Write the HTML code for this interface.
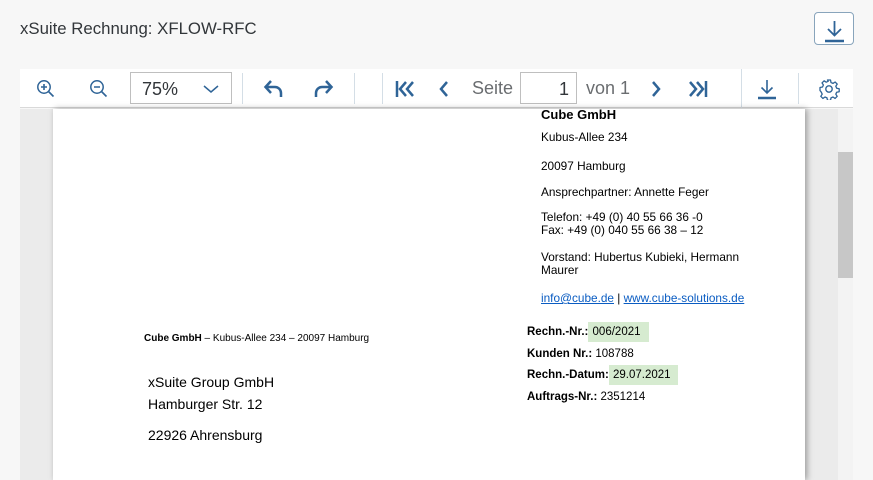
<!DOCTYPE html>
<html><head><style>
*{margin:0;padding:0;box-sizing:border-box}
body{width:873px;height:480px;overflow:hidden;background:#f7f7f7;font-family:"Liberation Sans",Arial,sans-serif;position:relative}
.abs{position:absolute}
.title{left:20px;top:19px;font-size:16.8px;color:#32363a}
.dlbtn{left:814px;top:12px;width:40px;height:33px;border:1px solid #89a5bc;border-radius:4px;background:#fff}
.tb{left:20px;top:69px;width:833px;height:39px;background:#fff;border-bottom:1px solid #d9d9d9}
.sep{position:absolute;top:4px;width:1px;height:31px;background:#d4dee6}
.zoom{left:110px;top:3px;width:102px;height:32px;border:1px solid #bfbfbf;font-size:18px;color:#32363a;padding:6px 0 0 11px}
.pg{left:500px;top:3px;width:57px;height:32px;border:1px solid #bfbfbf;font-size:18px;color:#32363a;text-align:right;padding:6px 7px 0 0}
.lbl{font-size:18px;color:#6a6d70;top:9px}
.view{left:20px;top:109px;width:818px;height:371px;background:#ebebeb}
.page{left:53px;top:109px;width:752px;height:371px;background:#fff;box-shadow:2px 0 6px rgba(0,0,0,.35)}
.sb{left:838px;top:109px;width:15px;height:371px;background:#f3f3f3}
.thumb{left:838px;top:152px;width:15px;height:126px;background:#c7c7c7}
.s{font-size:11.8px;color:#000}
.hl{background:#d6ebd0}
a{color:#0a5cc2;text-decoration:underline}
</style></head><body>
<div class="abs title">xSuite Rechnung: XFLOW-RFC</div>
<div class="abs dlbtn"><svg width="40" height="33" viewBox="0 0 40 33"><path d="M19.5 8v14M13 16l6.5 6.5L26 16" stroke="#2f6497" stroke-width="1.8" fill="none"/><path d="M10 28h19" stroke="#2f6497" stroke-width="2.5"/></svg></div>
<div class="abs tb">
 <svg class="abs" style="left:16px;top:10px" width="20" height="20" viewBox="0 0 20 20"><circle cx="8" cy="8" r="6.2" stroke="#2f6497" stroke-width="1.5" fill="none"/><path d="M5 8h6M8 5v6M12.5 12.5l5 5" stroke="#2f6497" stroke-width="1.6"/></svg>
 <svg class="abs" style="left:69px;top:10px" width="20" height="20" viewBox="0 0 20 20"><circle cx="8" cy="8" r="6.2" stroke="#2f6497" stroke-width="1.5" fill="none"/><path d="M5 8h6M12.5 12.5l5 5" stroke="#2f6497" stroke-width="1.6"/></svg>
 <div class="abs zoom">75%<svg class="abs" style="left:72px;top:11px" width="16" height="10"><path d="M1 2l7 6 7-6" stroke="#2f6497" stroke-width="1.5" fill="none"/></svg></div>
 <div class="sep" style="left:222px"></div>
 <svg class="abs" style="left:243px;top:9px" width="22" height="22" viewBox="0 0 22 22"><path d="M3 9h9a6 6 0 0 1 6 6v4" stroke="#2f6497" stroke-width="2.5" fill="none"/><path d="M8 3L2.5 9 8 15" stroke="#2f6497" stroke-width="2.5" fill="none"/></svg>
 <svg class="abs" style="left:292px;top:9px" width="22" height="22" viewBox="0 0 22 22"><path d="M19 9h-9a6 6 0 0 0-6 6v4" stroke="#2f6497" stroke-width="2.5" fill="none"/><path d="M14 3l5.5 6L14 15" stroke="#2f6497" stroke-width="2.5" fill="none"/></svg>
 <div class="sep" style="left:334px"></div>
 <div class="sep" style="left:362px"></div>
 <svg class="abs" style="left:374px;top:10px" width="22" height="20" viewBox="0 0 22 20"><path d="M3 2v16" stroke="#2f6497" stroke-width="2.5"/><path d="M12 3l-6 7 6 7M19 3l-6 7 6 7" stroke="#2f6497" stroke-width="2.5" fill="none"/></svg>
 <svg class="abs" style="left:416px;top:10px" width="14" height="20" viewBox="0 0 14 20"><path d="M11 3l-6 7 6 7" stroke="#2f6497" stroke-width="2.5" fill="none"/></svg>
 <div class="abs lbl" style="left:452px">Seite</div>
 <div class="abs pg">1</div>
 <div class="abs lbl" style="left:566px">von 1</div>
 <svg class="abs" style="left:630px;top:10px" width="14" height="20" viewBox="0 0 14 20"><path d="M3 3l6 7-6 7" stroke="#2f6497" stroke-width="2.5" fill="none"/></svg>
 <svg class="abs" style="left:667px;top:10px" width="22" height="20" viewBox="0 0 22 20"><path d="M19 2v16" stroke="#2f6497" stroke-width="2.5"/><path d="M3 3l6 7-6 7M10 3l6 7-6 7" stroke="#2f6497" stroke-width="2.5" fill="none"/></svg>
 <div class="sep" style="left:721px;top:0;height:39px"></div>
 <svg class="abs" style="left:736px;top:8px" width="22" height="24" viewBox="0 0 22 24"><path d="M11 3v13M5.5 10.5L11 16l5.5-5.5" stroke="#2f6497" stroke-width="1.6" fill="none"/><path d="M2 21h18" stroke="#2f6497" stroke-width="2.5"/></svg>
 <div class="sep" style="left:778px"></div>
 <svg class="abs" style="left:798px;top:9px" width="22" height="22" viewBox="0 0 22 22"><circle cx="11" cy="11" r="3.2" stroke="#2f6497" stroke-width="1.4" fill="none"/><path d="M9.5 2h3l.5 2.5 2 .9 2.1-1.4 2.1 2.1-1.4 2.1.9 2 2.5.5v3l-2.5.5-.9 2 1.4 2.1-2.1 2.1-2.1-1.4-2 .9-.5 2.5h-3l-.5-2.5-2-.9-2.1 1.4-2.1-2.1 1.4-2.1-.9-2L2 12.5v-3l2.5-.5.9-2L4 4.9 6.1 2.8l2.1 1.4 2-.9z" stroke="#2f6497" stroke-width="1.3" fill="none" stroke-linejoin="round"/></svg>
</div>
<div class="abs view"></div>
<div class="abs page"></div>
<div class="abs sb"></div>
<div class="abs thumb"></div>
<div class="abs" style="left:541px;top:107px;font-size:13px;font-weight:bold">Cube GmbH</div>
<div class="abs s" style="left:541px;top:130px">Kubus-Allee 234</div>
<div class="abs s" style="left:541px;top:159px">20097 Hamburg</div>
<div class="abs s" style="left:541px;top:185px">Ansprechpartner: Annette Feger</div>
<div class="abs s" style="left:541px;top:211px;line-height:13px">Telefon: +49 (0) 40 55 66 36 -0<br>Fax: +49 (0) 040 55 66 38 – 12</div>
<div class="abs s" style="left:541px;top:251px;line-height:13px">Vorstand: Hubertus Kubieki, Hermann<br>Maurer</div>
<div class="abs s" style="left:541px;top:291px"><a>info@cube.de</a> | <a>www.cube-solutions.de</a></div>
<div class="abs" style="left:144px;top:333px;font-size:10px"><b>Cube GmbH</b> – Kubus-Allee 234 – 20097 Hamburg</div>
<div class="abs s" style="left:527px;top:322px;line-height:21.7px;font-size:11.5px"><b>Rechn.-Nr.:</b><span class="hl" style="padding:4px 8px 4px 1px"> 006/2021</span><br><b>Kunden Nr.:</b> 108788<br><b>Rechn.-Datum:</b><span class="hl" style="padding:4px 7px 4px 1px"> 29.07.2021</span><br><b>Auftrags-Nr.:</b> 2351214</div>
<div class="abs" style="left:148px;top:371px;font-size:14px;line-height:22px">xSuite Group GmbH<br>Hamburger Str. 12</div>
<div class="abs" style="left:148px;top:427px;font-size:14px">22926 Ahrensburg</div>
</body></html>
